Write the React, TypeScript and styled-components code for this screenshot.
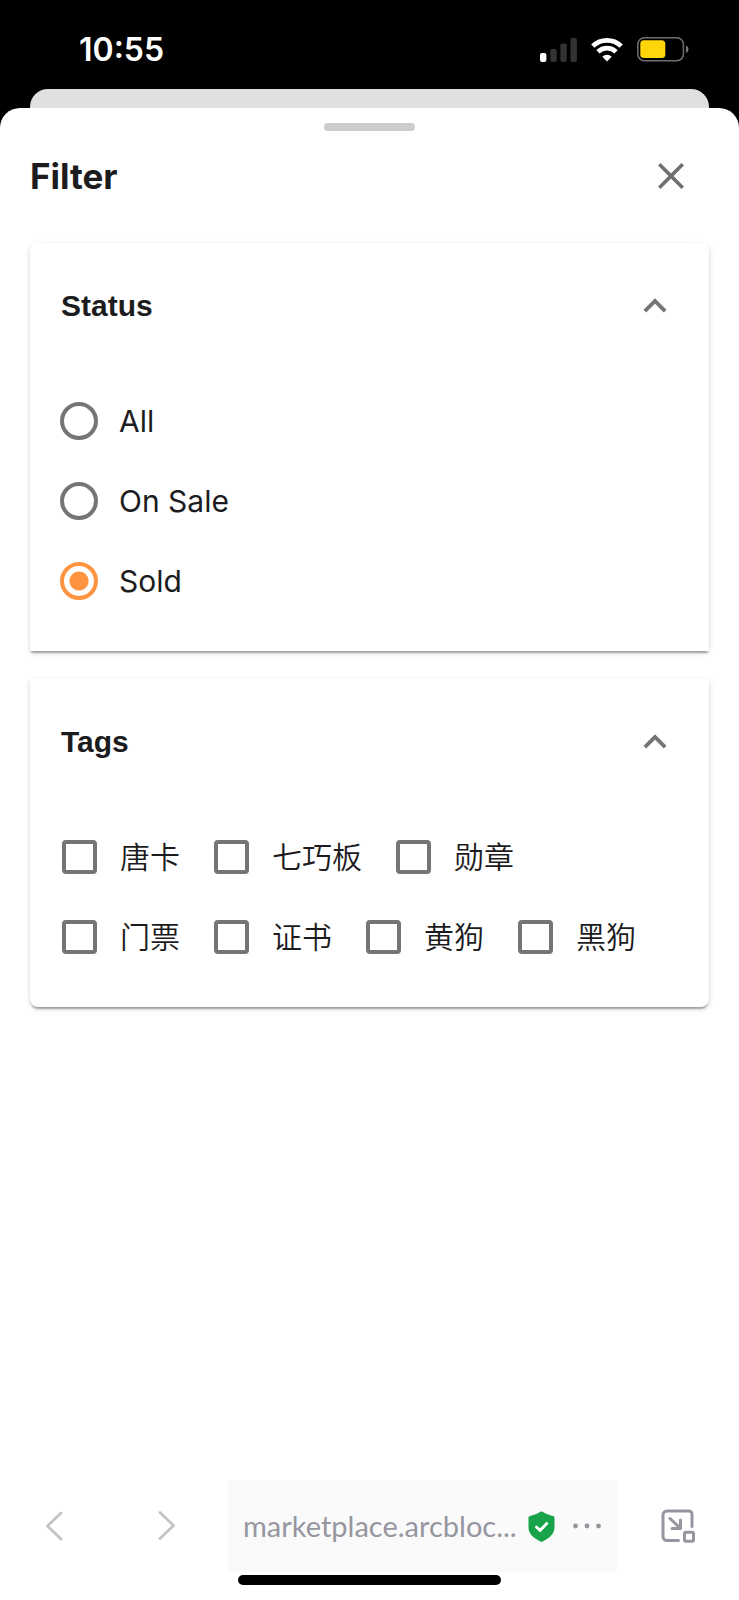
import React, { useState } from "react";
import styled, { createGlobalStyle } from "styled-components";

const ink = "#1c1c1e";
const grey = "#757575";
const orange = "#ff9440";
const toolGrey = "#96969f";

const GlobalStyle = createGlobalStyle`
  *, *::before, *::after { box-sizing: border-box; }
  body {
    margin: 0;
    background: #000;
    color: ${ink};
    font-family: Inter, "Noto Sans CJK SC", sans-serif;
  }
  button { font: inherit; color: inherit; background: none; border: 0; padding: 0; cursor: pointer; }
`;

const Screen = styled.div`
  display: flex;
  flex-direction: column;
  min-height: 100vh;
  background: #000;
`;

const StatusBar = styled.header`
  display: flex;
  align-items: center;
  justify-content: space-between;
  height: 89px;
  padding: 10px 50px 0 79px;
  color: #fff;
`;

const Clock = styled.time`
  font-size: 32px;
  line-height: 40px;
  font-weight: 600;
`;

const StatusIcons = styled.div`
  display: flex;
  align-items: center;
  gap: 14px;
`;

const PageBehind = styled.div`
  height: 19px;
  margin: 0 30px;
  border-radius: 18px 18px 0 0;
  background: #e0e0e0;
`;

const Sheet = styled.main`
  flex: 1;
  display: flex;
  flex-direction: column;
  border-radius: 20px 20px 0 0;
  background: #fff;
`;

const Handle = styled.div`
  width: 91px;
  height: 8px;
  margin: 15px auto 0;
  border-radius: 4px;
  background: #ccc;
`;

const TitleRow = styled.div`
  display: flex;
  align-items: center;
  justify-content: space-between;
  padding: 25px 48px 0 30px;
`;

const Title = styled.h1`
  margin: 0;
  font-size: 35px;
  line-height: 40px;
  font-weight: 700;
`;

const IconButton = styled.button`
  display: flex;
  align-items: center;
  justify-content: center;
  width: 40px;
  height: 40px;
`;

const Panels = styled.div`
  display: flex;
  flex-direction: column;
  gap: 28px;
  padding: 47px 30px 0;
`;

const Panel = styled.section`
  border-radius: 0;
  background: #fff;
  box-shadow: 0 4px 2px -2px rgba(0, 0, 0, 0.2), 0 2px 2px rgba(0, 0, 0, 0.14),
    0 2px 6px rgba(0, 0, 0, 0.12);
  &:first-child { border-top-left-radius: 8px; border-top-right-radius: 8px; }
  &:last-child { border-bottom-left-radius: 8px; border-bottom-right-radius: 8px; }
`;

const PanelHeading = styled.span`
  font-family: "Liberation Sans", Arial, sans-serif;
  font-size: 30px;
  line-height: 36px;
  font-weight: 700;
`;

const PanelToggle = styled.button`
  display: flex;
  align-items: center;
  justify-content: space-between;
  width: 100%;
  height: 126px;
  padding: 0 31px;
`;

const Options = styled.div<{ $stacked?: boolean }>`
  display: flex;
  flex-direction: ${(p) => (p.$stacked ? "column" : "row")};
  flex-wrap: ${(p) => (p.$stacked ? "nowrap" : "wrap")};
  padding: 12px 30px 30px;
`;

const Option = styled.label<{ $light?: boolean }>`
  display: flex;
  align-items: center;
  gap: 21px;
  height: 80px;
  margin-right: 32px;
  font-size: 30px;
  line-height: 44px;
  font-weight: ${(p) => (p.$light ? 350 : 400)};
`;

const Radio = styled.input`
  appearance: none;
  width: 38px;
  height: 38px;
  margin: 0;
  border: 4px solid ${grey};
  border-radius: 50%;
  &:checked {
    border-color: ${orange};
    background: radial-gradient(circle, ${orange} 9px, transparent 10px);
  }
`;

const Check = styled.input`
  appearance: none;
  width: 35px;
  height: 34px;
  margin: 0 2px;
  border: 4px solid ${grey};
  border-radius: 4px;
  &:checked { background: ${orange}; border-color: ${orange}; }
`;

const Toolbar = styled.nav`
  display: grid;
  grid-template-columns: 108px 118px minmax(0, 1fr) 122px;
  align-items: center;
  margin-top: auto;
  justify-items: center;
`;

const AddressBar = styled.div`
  display: flex;
  align-items: center;
  justify-self: stretch;
  height: 92px;
  margin-left: 2px;
  padding: 0 16px 0 15px;
  background: #fafafb;
`;

const Address = styled.a`
  flex: 1;
  min-width: 0;
  overflow: hidden;
  white-space: nowrap;
  color: ${toolGrey};
  font-family: Lato, sans-serif;
  font-size: 29px;
  line-height: 36px;
  text-decoration: none;
`;

const MoreButton = styled.button`
  display: flex;
  align-items: center;
  height: 40px;
  margin-left: 18px;
`;

const HomeIndicator = styled.div`
  width: 263px;
  height: 10px;
  margin: 3px auto 15px;
  border-radius: 5px;
  background: #000;
`;

const SignalIcon = () => (
  <svg width="37" height="24" viewBox="0 0 37 24" aria-hidden="true">
    <rect x="0" y="15" width="6.4" height="9" rx="2" fill="#fff" />
    <g fill="#333">
      <rect x="10.3" y="11" width="6.4" height="13" rx="2" />
      <rect x="20.4" y="5.5" width="6.4" height="18.5" rx="2" />
      <rect x="30.5" y="0" width="6.4" height="24" rx="2" />
    </g>
  </svg>
);

const WifiIcon = () => (
  <svg width="32" height="24" viewBox="0 0 32 24" aria-hidden="true">
    <g fill="none" stroke="#fff" strokeWidth="4.6">
      <path d="M1.8 8.2a20.2 20.2 0 0 1 28.4 0" />
      <path d="M7 13.8a12.8 12.8 0 0 1 18 0" />
    </g>
    <path d="M16 23.6 11.3 18.7a6.7 6.7 0 0 1 9.4 0Z" fill="#fff" />
  </svg>
);

const BatteryIcon = () => (
  <svg width="52" height="25" viewBox="0 0 52 25" aria-hidden="true">
    <rect x="0.8" y="0.8" width="45.6" height="23" rx="6.6" fill="none" stroke="#6e6e6e" strokeWidth="1.5" />
    <rect x="3.3" y="3.3" width="25" height="17.8" rx="3.6" fill="#ffd60a" />
    <path d="M49 8.6c3.2 1.5 3.2 6 0 7.4Z" fill="#7c7c7c" />
  </svg>
);

const CloseIcon = () => (
  <svg width="26" height="26" viewBox="0 0 26 26" aria-hidden="true">
    <path d="M1.3 1.3 24.7 24.7M24.7 1.3 1.3 24.7" stroke="#6f6f6f" strokeWidth="3.6" />
  </svg>
);

const ChevronUp = ({ open }: { open: boolean }) => (
  <svg width="46" height="46" viewBox="0 0 24 24" aria-hidden="true" fill={grey}>
    {open ? (
      <path d="M12 8l-6 6 1.41 1.41L12 10.83l4.59 4.58L18 14z" />
    ) : (
      <path d="M16.59 8.59 12 13.17 7.41 8.59 6 10l6 6 6-6z" />
    )}
  </svg>
);

const NavArrow = ({ forward }: { forward?: boolean }) => (
  <svg width="18" height="30" viewBox="0 0 18 30" aria-hidden="true">
    <path
      d={forward ? "M2 1.5 15.6 14.5 2 27.5" : "M16 2 2.4 15 16 28"}
      fill="none"
      stroke="#c4c4c4"
      strokeWidth="2.8"
      strokeLinecap="round"
      strokeLinejoin="round"
    />
  </svg>
);

const ShieldIcon = () => (
  <svg width="27" height="31" viewBox="0 0 27 31" role="img" aria-label="Secure">
    <path
      d="M12.3 0.8a2.2 2.2 0 0 1 2.4 0C17.700 2.900 21.200 4.200 25 4.900c.9.200 1.500.9 1.500 1.800v9.500c0 5.900-4.300 10.700-11.900 14.200a2.600 2.600 0 0 1-2.200 0C4.800 26.900.5 22.100.5 16.200V6.700c0-.9.6-1.600 1.500-1.800C5.800 4.200 9.300 2.900 12.300.8Z"
      fill="#18a34a"
    />
    <path d="m8.500 16 3.600 3.500 6.600-7" fill="none" stroke="#fff" strokeWidth="2.900" strokeLinecap="round" strokeLinejoin="round" />
  </svg>
);

const MoreIcon = () => (
  <svg width="28" height="6" viewBox="0 0 28 6" aria-hidden="true" fill={toolGrey}>
    <circle cx="2.500" cy="3" r="2.400" />
    <circle cx="14" cy="3" r="2.400" />
    <circle cx="25.500" cy="3" r="2.400" />
  </svg>
);

const MinimiseIcon = () => (
  <svg width="34" height="34" viewBox="0 0 34 34" aria-hidden="true">
    <g fill="none" stroke={toolGrey} strokeWidth="3" strokeLinecap="round" strokeLinejoin="round">
      <path d="M17.500 31.500H6a4 4 0 0 1-4-4V6a4 4 0 0 1 4-4h22a3 3 0 0 1 3 3v12.500" />
      <path d="m9 9.500 9.800 9.200M19.500 11v8.500H11" />
      <rect x="23.500" y="23.300" width="9" height="9" rx="1.500" />
    </g>
  </svg>
);

type PanelProps = { title: string; children: React.ReactNode };

const FilterPanel = ({ title, children }: PanelProps) => {
  const [open, setOpen] = useState(true);
  return (
    <Panel>
      <PanelToggle type="button" aria-expanded={open} onClick={() => setOpen(!open)}>
        <PanelHeading>{title}</PanelHeading>
        <ChevronUp open={open} />
      </PanelToggle>
      {open && children}
    </Panel>
  );
};

const statuses = ["All", "On Sale", "Sold"];
const tags = ["唐卡", "七巧板", "勋章", "门票", "证书", "黄狗", "黑狗"];

export default function App() {
  const [status, setStatus] = useState("Sold");
  return (
    <Screen>
      <GlobalStyle />
      <StatusBar>
        <Clock>10:55</Clock>
        <StatusIcons>
          <SignalIcon />
          <WifiIcon />
          <BatteryIcon />
        </StatusIcons>
      </StatusBar>
      <PageBehind />
      <Sheet>
        <Handle />
        <TitleRow>
          <Title>Filter</Title>
          <IconButton type="button" aria-label="Close">
            <CloseIcon />
          </IconButton>
        </TitleRow>
        <Panels>
          <FilterPanel title="Status">
            <Options $stacked role="radiogroup" aria-label="Status">
              {statuses.map((name) => (
                <Option key={name}>
                  <Radio
                    type="radio"
                    name="status"
                    value={name}
                    checked={status === name}
                    onChange={() => setStatus(name)}
                  />
                  {name}
                </Option>
              ))}
            </Options>
          </FilterPanel>
          <FilterPanel title="Tags">
            <Options role="group" aria-label="Tags">
              {tags.map((name) => (
                <Option key={name} $light>
                  <Check type="checkbox" name="tags" value={name} />
                  {name}
                </Option>
              ))}
            </Options>
          </FilterPanel>
        </Panels>
        <Toolbar aria-label="Browser">
          <IconButton type="button" aria-label="Back">
            <NavArrow />
          </IconButton>
          <IconButton type="button" aria-label="Forward">
            <NavArrow forward />
          </IconButton>
          <AddressBar>
            <Address href="#">marketplace.arcbloc...</Address>
            <ShieldIcon />
            <MoreButton type="button" aria-label="More">
              <MoreIcon />
            </MoreButton>
          </AddressBar>
          <IconButton type="button" aria-label="Minimise">
            <MinimiseIcon />
          </IconButton>
        </Toolbar>
        <HomeIndicator />
      </Sheet>
    </Screen>
  );
}
